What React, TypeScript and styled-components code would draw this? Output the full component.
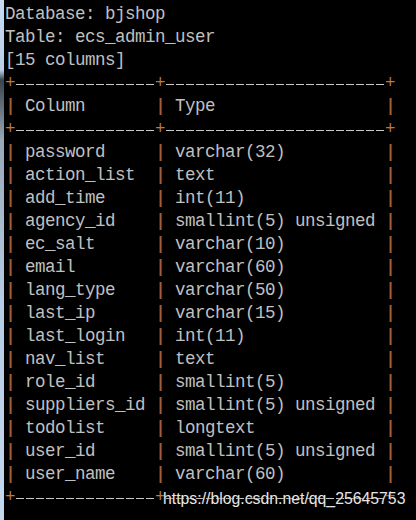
import React from "react";
import styled, { createGlobalStyle } from "styled-components";

const GlobalStyle = createGlobalStyle`
  html, body { margin: 0; padding: 0; background: #000; }
`;

const Window = styled.div`
  display: flex;
  width: 416px;
  height: 520px;
  background: #000;
  position: relative;
  overflow: hidden;
`;

const Edge = styled.div`
  width: 4px;
  flex: none;
  background: linear-gradient(
    to bottom,
    #c8dcf0 0px,
    #b9cfe6 70px,
    #3a4350 80px,
    #5a636e 100px,
    #9aa8b8 140px,
    #b6cce4 300px,
    #c4d8ee 520px
  );
`;

const Screen = styled.div`
  flex: 1;
  padding: 3px 0 0 1px;
  font-family: "Liberation Mono", "DejaVu Sans Mono", monospace;
  font-size: 17.5px;
  letter-spacing: -0.5px;
  color: #c0c0c0;
`;

const Line = styled.div`
  height: 23px;
  line-height: 23px;
  white-space: pre;
`;

const Pipe = styled.span`
  color: #a8642c;
  text-shadow: 1px 0 0 rgba(40, 90, 160, 0.7);
`;

const Plus = styled.span`
  color: #b87a44;
`;

const Dashes = styled.span`
  color: transparent;
  background: repeating-linear-gradient(
      to right,
      transparent 0 1px,
      #c8c8c8 1px 9px,
      transparent 9px 10px
    )
    0 11px / 100% 1px no-repeat;
`;

const Watermark = styled.div`
  position: absolute;
  left: 163px;
  top: 490px;
  font-family: "Liberation Sans", Arial, sans-serif;
  font-size: 15.8px;
  color: #e6e6e6;
  text-shadow: 0 0 2px rgba(0, 0, 0, 0.8);
  white-space: nowrap;
`;

const rows: [string, string][] = [
  ["password", "varchar(32)"],
  ["action_list", "text"],
  ["add_time", "int(11)"],
  ["agency_id", "smallint(5) unsigned"],
  ["ec_salt", "varchar(10)"],
  ["email", "varchar(60)"],
  ["lang_type", "varchar(50)"],
  ["last_ip", "varchar(15)"],
  ["last_login", "int(11)"],
  ["nav_list", "text"],
  ["role_id", "smallint(5)"],
  ["suppliers_id", "smallint(5) unsigned"],
  ["todolist", "longtext"],
  ["user_id", "smallint(5) unsigned"],
  ["user_name", "varchar(60)"],
];

const Separator = () => (
  <Line>
    <Plus>+</Plus>
    <Dashes>{"-".repeat(14)}</Dashes>
    <Plus>+</Plus>
    <Dashes>{"-".repeat(22)}</Dashes>
    <Plus>+</Plus>
  </Line>
);

const Row = ({ a, b }: { a: string; b: string }) => (
  <Line>
    <Pipe>|</Pipe>
    {" " + a.padEnd(12) + " "}
    <Pipe>|</Pipe>
    {" " + b.padEnd(20) + " "}
    <Pipe>|</Pipe>
  </Line>
);

export default function App() {
  return (
    <>
      <GlobalStyle />
      <Window>
        <Edge />
        <Screen>
          <Line>Database: bjshop</Line>
          <Line>Table: ecs_admin_user</Line>
          <Line>[15 columns]</Line>
          <Separator />
          <Row a="Column" b="Type" />
          <Separator />
          {rows.map(([a, b]) => (
            <Row key={a} a={a} b={b} />
          ))}
          <Separator />
        </Screen>
        <Watermark>https://blog.csdn.net/qq_25645753</Watermark>
      </Window>
    </>
  );
}
